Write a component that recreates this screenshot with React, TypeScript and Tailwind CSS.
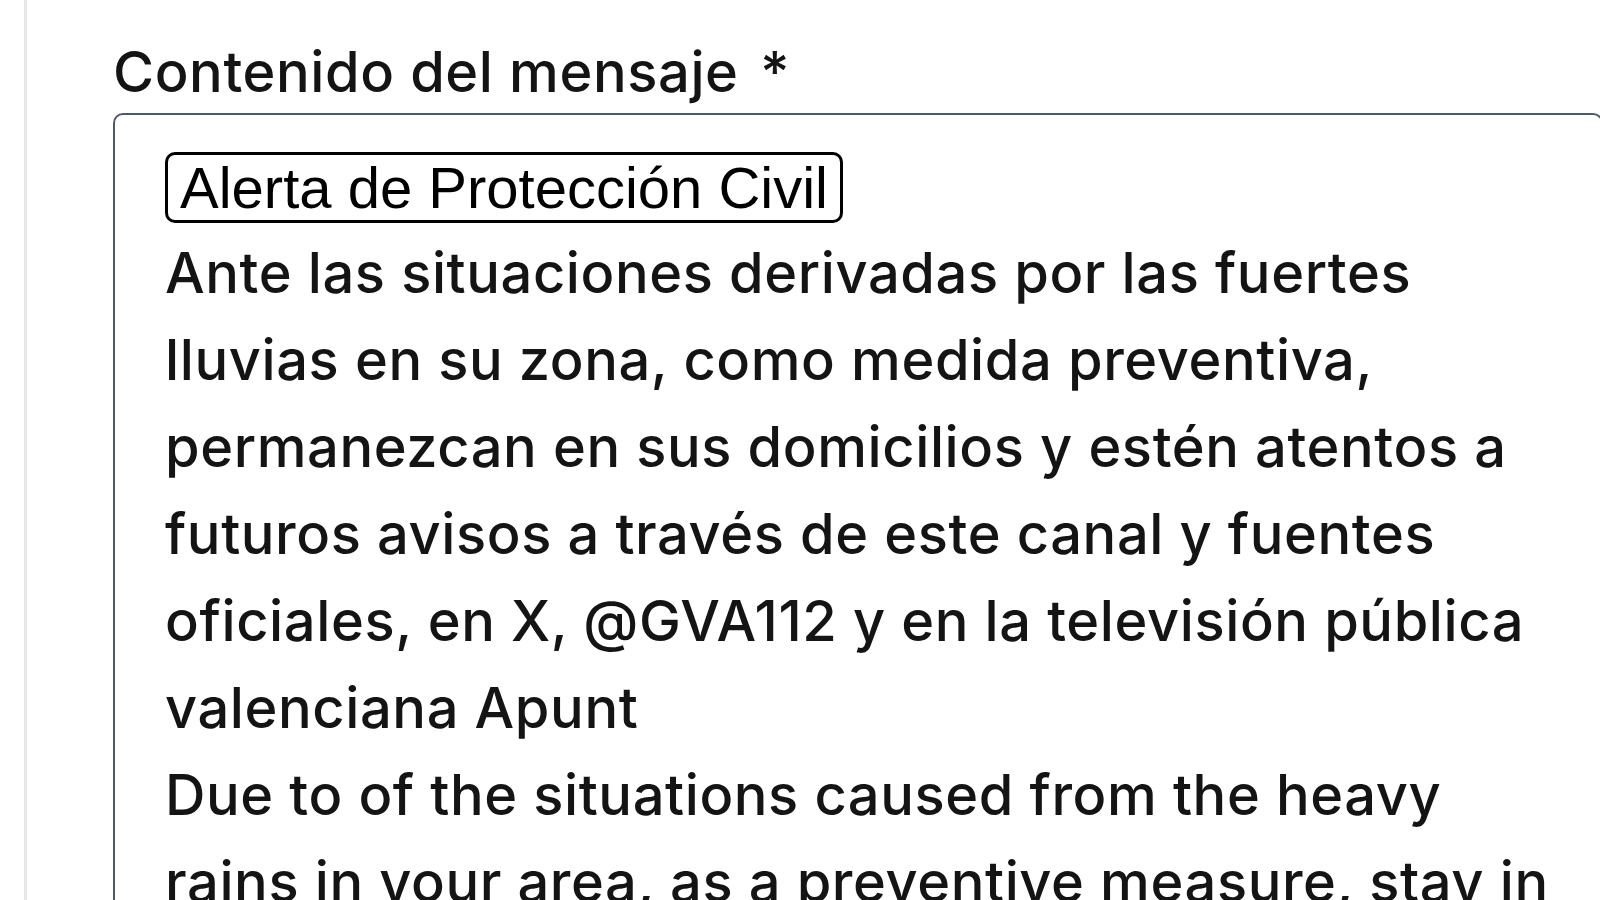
import React from "react";

const lines = [
    "Ante las situaciones derivadas por las fuertes",
    "lluvias en su zona, como medida preventiva,",
    "permanezcan en sus domicilios y estén atentos a",
    "futuros avisos a través de este canal y fuentes",
    "oficiales, en X, @GVA112 y en la televisión pública",
    "valenciana Apunt",
    "Due to of the situations caused from the heavy",
    "rains in your area, as a preventive measure, stay in",
];

export default function App() {
    return (
        <div className="w-screen h-screen overflow-hidden bg-white flex font-['Inter','Noto_Sans',sans-serif] text-[#141414]">
            {/* left rail */}
            <div className="w-[24px] shrink-0" />
            <div className="w-[3px] shrink-0 bg-[#e7e7e7]" />

            <div className="flex-1 pl-[86px] pt-[38px] mr-[-3px]">
                <label className="block text-[56px] leading-[68px] font-medium tracking-[0.6px]">
                    Contenido del mensaje <span className="ml-[6px]">*</span>
                </label>

                <div className="mt-[7px] border-2 border-[#505a66] rounded-[10px] pl-[50px] pr-[40px] pt-[28px] h-[900px]">
                    <div className="text-[56px] leading-[87px] font-medium tracking-[0.6px]">
                        <div>
                            <span className="inline-block align-middle -translate-y-[3px] border-[3px] border-black rounded-[10px] px-[12px] h-[71px] leading-[65px] text-[58px] font-normal tracking-normal font-['Liberation_Sans',Arial,sans-serif] text-black">
                                Alerta de Protección Civil
                            </span>
                        </div>
                        {lines.map((line) => (
                            <div key={line} className="whitespace-nowrap">
                                {line}
                            </div>
                        ))}
                    </div>
                </div>
            </div>
        </div>
    );
}
